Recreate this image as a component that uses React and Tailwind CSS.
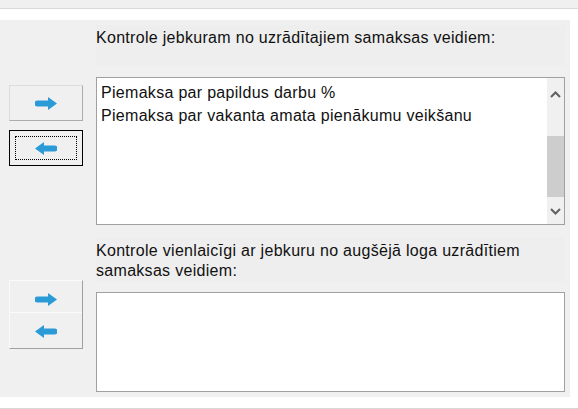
import React from 'react';

const font = { fontFamily: '"Liberation Sans", Arial, sans-serif' };

const ArrowIcon = ({ dir = 'right' }) => (
  <svg
    width="22"
    height="13"
    viewBox="0 0 22 13"
    className={dir === 'left' ? '-scale-x-100' : ''}
  >
    <path d="M2.5 3.5 H13 V0 L22 6.5 L13 13 V9.5 H2.5 A3 3 0 0 1 2.5 3.5 Z" fill="#2a9bd7" />
  </svg>
);

const Chevron = ({ up }) => (
  <svg width="11" height="7" viewBox="0 0 11 7">
    <path
      d={up ? 'M1 6 L5.5 1.5 L10 6' : 'M1 1 L5.5 5.5 L10 1'}
      fill="none"
      stroke="#606060"
      strokeWidth="2"
    />
  </svg>
);

const Scrollbar = () => (
  <div className="flex w-[17px] flex-col bg-[#f0f0f0]">
    <div className="flex h-[17px] items-center justify-center mt-[8px]">
      <Chevron up />
    </div>
    <div className="mt-[33px] h-[61px] bg-[#cdcdcd]" />
    <div className="flex-1" />
    <div className="flex h-[17px] items-center justify-center mb-[4px]">
      <Chevron />
    </div>
  </div>
);

const items = [
  'Piemaksa par papildus darbu %',
  'Piemaksa par vakanta amata pienākumu veikšanu',
];

export default function App() {
  return (
    <div className="h-[409px] w-[578px] bg-white text-[16px] tracking-[0.3px] text-[#111]" style={font}>
      {/* top strip */}
      <div className="h-[9px] border-b border-[#d9d9d9] bg-[#f0f0f0]" />
      <div className="h-[11px]" />

      {/* included pay types */}
      <div className="flex h-[213px] w-[570px] bg-[#f0f0f0] pl-[9px]">
        <div className="flex w-[74px] flex-col pt-[65px]">
          <button className="flex h-[36px] items-center justify-center border border-[#dcdcdc] border-b-[#adadad] border-r-[#adadad] bg-[#f0f0f0]">
            <ArrowIcon />
          </button>
          <button className="mt-[9px] flex h-[36px] items-center justify-center border border-black bg-[#f0f0f0] p-[5px]">
            <span className="flex h-full w-full items-center justify-center border border-dotted border-black">
              <ArrowIcon dir="left" />
            </span>
          </button>
        </div>
        <div className="ml-[13px] flex w-[469px] flex-col pt-[5px]">
          <div className="h-[41px] bg-[#eeeeee] pt-[3px] leading-[19px]">
            Kontrole jebkuram no uzrādītajiem samaksas veidiem:
          </div>
          <div className="mt-[11px] flex h-[148px] border border-[#a0a0a0] bg-white">
            <ul className="flex-1 pl-[4px] pt-[3px]">
              {items.map((t) => (
                <li key={t} className="h-[23px] leading-[23px]">
                  {t}
                </li>
              ))}
            </ul>
            <Scrollbar />
          </div>
        </div>
      </div>

      {/* concurrent pay types */}
      <div className="flex h-[164px] w-[570px] bg-[#f0f0f0] pl-[9px]">
        <div className="flex w-[74px] flex-col pt-[47px]">
          <div className="flex flex-col border border-[#fafafa] border-b-[#a0a0a0] border-r-[#a0a0a0]">
            <button className="flex h-[31px] items-start justify-center pt-[12px]">
              <ArrowIcon />
            </button>
            <button className="flex h-[36px] items-start justify-center border-t border-[#fafafa] pt-[12px]">
              <ArrowIcon dir="left" />
            </button>
          </div>
        </div>
        <div className="ml-[13px] flex w-[469px] flex-col pt-[4px]">
          <div className="h-[45px] bg-[#eeeeee] pt-[4px] leading-[20px]">
            Kontrole vienlaicīgi ar jebkuru no augšējā loga uzrādītiem
            <br />
            samaksas veidiem:
          </div>
          <div className="mt-[10px] h-[100px] border border-[#a0a0a0] bg-white" />
        </div>
      </div>

      <div className="h-[11px]" />
      <div className="h-[1px] bg-[#d9d9d9]" />
    </div>
  );
}
